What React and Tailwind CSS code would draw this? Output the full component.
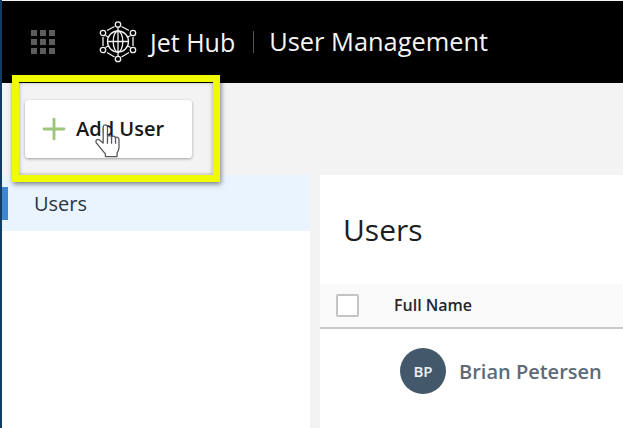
import { Plus } from "lucide-react";

function HubLogo() {
  const nodes = [
    [20, 4.5],
    [5, 13],
    [35, 13],
    [5, 30],
    [35, 30],
    [20, 39],
  ];
  return (
    <svg width="40" height="44" viewBox="0 0 40 44" fill="none" stroke="#f2f2f2" strokeWidth="1.3">
      {nodes.map(([x, y], i) => (
        <circle key={i} cx={x} cy={y} r="2.7" />
      ))}
      <circle cx="20" cy="21.5" r="10.5" />
      <ellipse cx="20" cy="21.5" rx="4.8" ry="10.5" />
      <path d="M9.5 21.5h21M20 11v21" />
      <path d="M20 7.5v3M23.5 6.5l7.5 4M16.5 6.5l-7.5 4M7.5 15.5l3.5 2M32.5 15.5l-3.5 2M7.5 27.5l3.5-2M32.5 27.5l-3.5-2M9 32.5l7.5 4.5M31 32.5l-7.5 4.5M20 32v4M5 17v9M35 17v9" />
    </svg>
  );
}

function HandCursor() {
  return (
    <svg width="28" height="37" viewBox="0 0 26 34" fill="#ffffff" stroke="#55565a" strokeWidth="1.2" strokeLinejoin="round">
      <path d="M8.5 3.5c0-2.6 4-2.6 4 0v9.2c.3-1.8 3.6-1.6 3.8.4.5-1.7 3.4-1.4 3.6.6.8-1.3 3.2-.8 3.3 1.2v7.6c0 2.2-.8 3.7-1.8 5.3v3.2H10.6v-2.4c-2-2.4-4.4-5.2-8.4-10.3-1.5-2 .9-4.3 3-2.7l3.3 2.9z" />
      <path d="M12.5 13v6M16.3 13.2V19M20 14v5" fill="none" />
    </svg>
  );
}

export default function App() {
  return (
    <div className="relative flex h-[428px] w-[623px] flex-col overflow-hidden border-l-2 border-[#123d63] bg-[#f3f3f3] font-['Open_Sans',sans-serif]">
      {/* top bar */}
      <header className="mt-px -ml-0.5 flex h-[82px] shrink-0 items-center bg-black pl-[31px]">
        <div className="grid grid-cols-3 gap-[3px]">
          {[...Array(9)].map((_, i) => (
            <span key={i} className="h-[6px] w-[6px] bg-[#5c5c5c]" />
          ))}
        </div>
        <div className="ml-[43px] flex items-center">
          <HubLogo />
        </div>
        <span className="ml-[12px] text-[25px] leading-none text-[#f5f5f5]">Jet Hub</span>
        <span className="ml-[18px] h-[22px] w-px bg-[#555555]" />
        <span className="ml-[15px] text-[25.4px] leading-none text-[#f5f5f5]">User Management</span>
      </header>

      {/* toolbar */}
      <div className="flex h-[92px] shrink-0 items-start pl-[23px] pt-[17px]">
        <button className="flex h-[58px] w-[167px] items-center rounded-[3px] bg-white pl-[12px] text-[20px] font-semibold text-[#17181c] shadow-[0_1px_3px_rgba(0,0,0,0.35)]">
          <Plus size={34} strokeWidth={2} className="text-[#9dc57c]" />
          <span className="ml-[5px]">Add User</span>
        </button>
      </div>

      <div className="flex min-h-0 flex-1 gap-[10px]">
        {/* sidebar */}
        <aside className="w-[308px] shrink-0 bg-white">
          <div className="flex h-[56px] items-center bg-[#eaf4fe]">
            <span className="h-[33px] w-[6px] bg-[#3e86cf]" />
            <span className="ml-[26px] pt-[2px] text-[20px] text-[#2a3540]">Users</span>
          </div>
        </aside>

        {/* users table */}
        <main className="flex-1 bg-white">
          <h1 className="flex h-[109px] items-center pb-[1px] pl-[23px] text-[30px] text-[#1b1d20]">Users</h1>
          <div className="flex h-[45px] items-center border-b-2 border-[#c9c9c9] bg-[#fafafa] pl-[16px]">
            <span className="h-[23px] w-[23px] rounded-[2px] border-2 border-[#c4c4c4] bg-white" />
            <span className="mb-[2px] ml-[35px] text-[16px] font-semibold text-[#24272b]">Full Name</span>
          </div>
          <div className="mt-[19px] flex items-center pl-[80px]">
            <span className="flex h-[46px] w-[46px] items-center justify-center rounded-full bg-[#43596b] text-[15px] font-semibold text-[#eef2f5]">
              BP
            </span>
            <span className="ml-[13px] pt-[2px] text-[20px] font-semibold text-[#5d6b78]">Brian Petersen</span>
          </div>
        </main>
      </div>

      {/* yellow callout drawn over the page */}
      <div className="absolute left-[10px] top-[75px] h-[107px] w-[208px] border-[7px] border-[#f0fa00] shadow-[1px_2px_5px_rgba(0,0,0,0.5),inset_0_0_4px_rgba(0,0,0,0.35)]" />
      <div className="absolute left-[92px] top-[123px]">
        <HandCursor />
      </div>
    </div>
  );
}
